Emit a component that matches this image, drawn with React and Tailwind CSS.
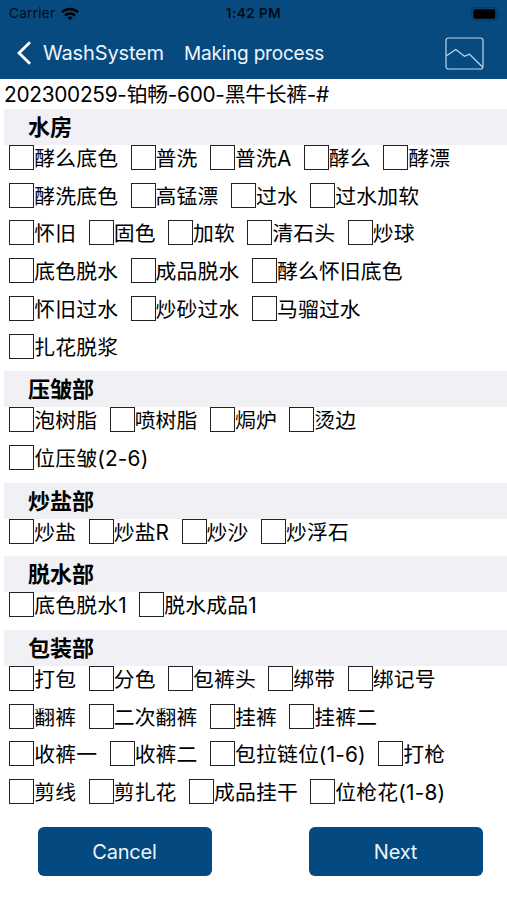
import React from 'react';

const sections = [
    {
        title: '水房',
        rows: [
            ['酵么底色', '普洗', '普洗A', '酵么', '酵漂'],
            ['酵洗底色', '高锰漂', '过水', '过水加软'],
            ['怀旧', '固色', '加软', '清石头', '炒球'],
            ['底色脱水', '成品脱水', '酵么怀旧底色'],
            ['怀旧过水', '炒砂过水', '马骝过水'],
            ['扎花脱浆'],
        ],
    },
    {
        title: '压皱部',
        rows: [
            ['泡树脂', '喷树脂', '焗炉', '烫边'],
            ['位压皱(2-6)'],
        ],
    },
    {
        title: '炒盐部',
        rows: [['炒盐', '炒盐R', '炒沙', '炒浮石']],
    },
    {
        title: '脱水部',
        rows: [['底色脱水1', '脱水成品1']],
    },
    {
        title: '包装部',
        rows: [
            ['打包', '分色', '包裤头', '绑带', '绑记号'],
            ['翻裤', '二次翻裤', '挂裤', '挂裤二'],
            ['收裤一', '收裤二', '包拉链位(1-6)', '打枪'],
            ['剪线', '剪扎花', '成品挂干', '位枪花(1-8)'],
        ],
    },
];

const WifiIcon = () => (
    <svg width="18" height="14" viewBox="0 0 18 14" fill="none" stroke="#000" strokeWidth="2.5">
        <path d="M1 5.2C5.5 0.9 12.5 0.9 17 5.2" />
        <path d="M4 8.5C6.8 5.9 11.2 5.9 14 8.5" />
        <path d="M9 13.2L6.3 10.5C7.8 9.2 10.2 9.2 11.7 10.5Z" fill="#000" stroke="none" />
    </svg>
);

const BatteryIcon = () => (
    <svg width="30" height="14" viewBox="0 0 30 14" fill="none">
        <rect x="0.7" y="0.7" width="25" height="12.6" rx="3.5" stroke="#063c6b" strokeWidth="1.2" />
        <rect x="2.3" y="2.3" width="22" height="9.4" rx="2" fill="#000" />
        <path d="M27 4.8C28.8 5.4 28.8 8.6 27 9.2Z" fill="#063c6b" />
    </svg>
);

const StatusBar = () => (
    <div className="grid h-[27px] grid-cols-3 items-center pl-[9px] pr-[6px] text-[#020a12]">
        <div className="flex items-center gap-[6px]">
            <span className="text-[13.5px] tracking-[0.3px]">Carrier</span>
            <WifiIcon />
        </div>
        <span className="pr-[3px] text-center text-[13.5px] font-semibold tracking-[0.5px]">1:42 PM</span>
        <div className="flex justify-end">
            <BatteryIcon />
        </div>
    </div>
);

const NavBar = () => (
    <div className="flex h-[52px] items-center pl-[16px] pr-[23px] text-[20px] text-[#edf5fc]">
        <button className="flex items-center gap-[12px]">
            <svg width="15" height="24" viewBox="0 0 15 24" fill="none" stroke="#fff" strokeWidth="2.8">
                <path d="M14 1.2L3 12L14 22.8" />
            </svg>
            <span className="tracking-[-0.15px]">WashSystem</span>
        </button>
        <h1 className="ml-[20px] pt-[2px] text-[19px] tracking-[-0.2px]">Making process</h1>
        <svg className="ml-auto" width="39" height="33" viewBox="0 0 39 33" fill="none" stroke="#b9d9f3" strokeWidth="1.2">
            <rect x="1" y="1" width="37" height="31" rx="2.5" />
            <path d="M1.5 18.8L10.8 12.5L19.5 19.2L24.5 17.2L37.5 30" />
        </svg>
    </div>
);

const CheckItem = ({ label }) => (
    <label className="flex items-start whitespace-nowrap">
        <span className="h-[25px] w-[25px] shrink-0 border border-[#222]"></span>
        <span className="pt-px">{label}</span>
    </label>
);

const Section = ({ title, rows }) => (
    <section>
        <h2 className="ml-[4px] h-[35.9px] bg-[#f0f0f5] pl-[24px] text-[22px] font-bold leading-[37px]">{title}</h2>
        {rows.map((row, i) => (
            <div key={i} className="flex h-[37.75px] items-start gap-[12.4px] pl-[9.3px] text-[20.8px] leading-[25px] tracking-[0.18px]">
                {row.map((label) => (
                    <CheckItem key={label} label={label} />
                ))}
            </div>
        ))}
    </section>
);

const App = () => {
    return (
        <div className="h-[900px] w-[507px] overflow-hidden bg-white font-['Inter','Noto_Sans_CJK_SC',sans-serif] text-black">
            <header className="bg-[#074a80]">
                <StatusBar />
                <NavBar />
            </header>
            <main className="[font-feature-settings:'calt'_0]">
                <p className="h-[30px] pl-[4px] pt-px text-[20.8px] leading-[30px] tracking-[-0.27px]">202300259-铂畅-600-黑牛长裤-#</p>
                {sections.map((section) => (
                    <Section key={section.title} {...section} />
                ))}
            </main>
            <div className="flex justify-between pl-[37.5px] pr-[24.5px] pt-[10px] text-[20px] tracking-[-0.2px] text-[#edf5fc]">
                <button className="h-[49px] w-[174px] rounded-[6px] bg-[#044a80] pt-[2px]">Cancel</button>
                <button className="h-[49px] w-[174px] rounded-[6px] bg-[#044a80] pt-[2px]">Next</button>
            </div>
        </div>
    );
};

export default App;
